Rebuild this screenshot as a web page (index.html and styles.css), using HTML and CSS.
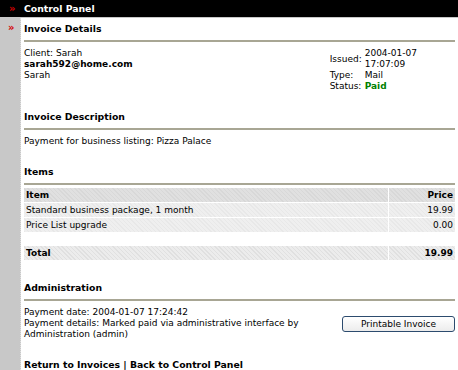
FILE: index.html
```html
<!DOCTYPE html>
<html lang="en">
<head>
    <meta charset="UTF-8">
    <title>Control Panel - Invoice</title>
    <link rel="stylesheet" href="styles.css">
</head>
<body>
    <div class="topbar">
        <span class="marker">&raquo;</span>
        <span class="topbar-title">Control Panel</span>
    </div>

    <div class="layout">
        <div class="sidebar">
            <span class="marker">&raquo;</span>
        </div>

        <div class="main-content">
            <!-- Invoice Details -->
            <h2 class="section-title">Invoice Details</h2>
            <div class="details">
                <div class="client">
                    Client: Sarah<br>
                    <b>sarah592@home.com</b><br>
                    Sarah
                </div>
                <table class="meta">
                    <tr>
                        <td class="meta-label">Issued:</td>
                        <td>2004-01-07<br>17:07:09</td>
                    </tr>
                    <tr>
                        <td class="meta-label">Type:</td>
                        <td>Mail</td>
                    </tr>
                    <tr>
                        <td class="meta-label">Status:</td>
                        <td class="paid">Paid</td>
                    </tr>
                </table>
            </div>

            <!-- Invoice Description -->
            <h2 class="section-title">Invoice Description</h2>
            <p class="text">Payment for business listing: Pizza Palace</p>

            <!-- Items -->
            <h2 class="section-title">Items</h2>
            <table class="items">
                <tr class="head">
                    <th>Item</th>
                    <th class="price">Price</th>
                </tr>
                <tr class="row">
                    <td>Standard business package, 1 month</td>
                    <td class="price">19.99</td>
                </tr>
                <tr class="row">
                    <td>Price List upgrade</td>
                    <td class="price">0.00</td>
                </tr>
                <tr class="spacer"><td colspan="2"></td></tr>
                <tr class="total">
                    <th>Total</th>
                    <th class="price">19.99</th>
                </tr>
            </table>

            <!-- Administration -->
            <h2 class="section-title">Administration</h2>
            <div class="admin">
                <div class="admin-text">
                    Payment date: 2004-01-07 17:24:42<br>
                    Payment details: Marked paid via administrative interface by Administration (admin)
                </div>
                <button type="button" class="print-btn">Printable Invoice</button>
            </div>

            <div class="links">
                <a href="#">Return to Invoices</a> | <a href="#">Back to Control Panel</a>
            </div>
        </div>
    </div>
</body>
</html>
```

FILE: styles.css
```css
body {
    margin: 0;
    font-family: 'DejaVu Sans', Verdana, sans-serif;
    font-size: 9px;
    line-height: 11px;
    color: #000;
    background: #fff;
}

.topbar {
    background: #000;
    color: #fff;
    height: 17px;
    display: flex;
    align-items: center;
    border-bottom: 1px solid #c8c8c8;
}

.marker {
    color: #d40000;
    font-weight: bold;
    font-size: 10px;
    width: 24px;
    padding-left: 9px;
    box-sizing: border-box;
}

.topbar-title {
    font-weight: bold;
    font-size: 9.3px;
}

.layout {
    display: flex;
    min-height: 352px;
}

.sidebar {
    width: 20px;
    background: #c8c8c8;
    border-right: 1px dotted #e0e0e0;
    padding-top: 4px;
}

.sidebar .marker {
    display: block;
    padding-left: 8px;
}

.main-content {
    flex-grow: 1;
    padding: 4px 3px 0 3px;
}

.section-title {
    font-size: 9.3px;
    font-weight: bold;
    margin: 0 0 6px 0;
    padding-bottom: 4px;
    line-height: 14px;
    border-bottom: 2px solid #a8a694;
}

.details {
    display: flex;
    justify-content: space-between;
    margin-bottom: 18px;
}

.meta {
    border-collapse: collapse;
    margin-right: 38px;
}

.meta td {
    padding: 0;
    vertical-align: top;
}

.meta .meta-label {
    padding-right: 3px;
    vertical-align: middle;
}

.paid {
    color: #008000;
    font-weight: bold;
}

.text {
    margin: 0 0 18px 0;
}

.items {
    width: 100%;
    border-collapse: separate;
    border-spacing: 0 1px;
    margin-top: -4px;
    margin-bottom: 20px;
}

.items th,
.items td {
    text-align: left;
    padding: 1px 2px;
    height: 12px;
}

.items .price {
    text-align: right;
    width: 62px;
    border-left: 1px solid #fff;
}

.items .head th {
    background: repeating-linear-gradient(45deg, #d8d8d8 0 1px, #e0e0e0 1px 3px);
}

.items .row td {
    background: repeating-linear-gradient(45deg, #e8e8e8 0 1px, #efefef 1px 3px);
}

.items .spacer td {
    height: 12px;
    padding: 0;
}

.items .total th {
    background: repeating-linear-gradient(45deg, #e0e0e0 0 1px, #ececec 1px 3px);
}

.admin {
    display: flex;
    justify-content: space-between;
    align-items: flex-start;
    margin-bottom: 19px;
}

.admin-text {
    width: 300px;
}

.print-btn {
    margin-top: 9px;
    width: 113px;
    height: 16px;
    padding: 0;
    font-family: 'DejaVu Sans', Verdana, sans-serif;
    font-size: 9px;
    color: #000;
    background: linear-gradient(#ffffff, #ececec);
    border: 1px solid #2c4b6e;
    border-radius: 3px;
}

.links {
    font-weight: bold;
    font-size: 9.3px;
}

.links a {
    color: #000;
    text-decoration: none;
}
```
